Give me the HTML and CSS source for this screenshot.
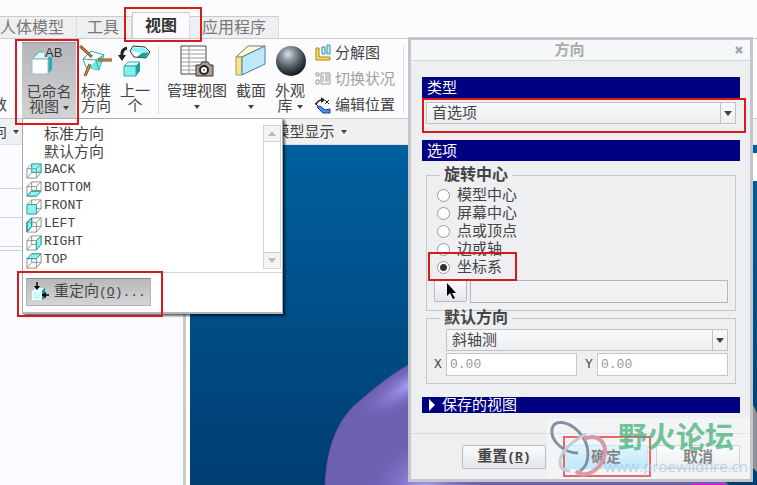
FILE: index.html
```html
<!DOCTYPE html>
<html lang="zh-CN">
<head>
    <meta charset="UTF-8">
    <meta name="viewport" content="width=device-width, initial-scale=1.0">
    <title>视图 - 重定向</title>
    <link rel="stylesheet" href="styles.css">
</head>
<body>
    <div class="app">
        <nav class="tabs">
            <button class="tab first">人体模型</button>
            <button class="tab">工具</button>
            <button class="tab active marked">视图</button>
            <button class="tab last">应用程序</button>
        </nav>

        <div class="ribbon">
            <button class="tool cut"><span class="label">数</span></button>
            <div class="dropdown">
                <button class="tool pressed marked">
                    <svg class="icon" width="40" height="36" viewBox="0 0 40 36">
                        <path d="M3 13l7-7h14l-4 7z" fill="#dffcfc" stroke="#3fb5b5"/>
                        <path d="M18 13l5-6v17l-5 4z" fill="#26b3b0"/>
                        <path d="M3 13h16v15H3z" fill="#fff" stroke="#9bb"/>
                        <path d="M15 0h18v11H15z" fill="#bbbdc0"/>
                        <text x="16" y="11" class="icon-text">AB</text>
                    </svg>
                    <span class="label">已命名<br>视图 <i class="caret"></i></span>
                </button>

                <div class="menu">
                    <div class="menu-body">
                        <ul class="views">
                            <li><button><span class="pad"></span>标准方向</button></li>
                            <li><button><span class="pad"></span>默认方向</button></li>
                            <li><button class="en"><svg class="cube" viewBox="0 0 18 18"><path class="face" d="M6 2h10v9H6z"/><path d="M1 7h10v10H1zM1 7l5-5M11 7l5-5M1 17l5-6M11 17l5-6"/></svg>BACK</button></li>
                            <li><button class="en"><svg class="cube" viewBox="0 0 18 18"><path d="M1 7h10v10H1zM6 2h10v9H6zM1 7l5-5M11 7l5-5M1 17l5-6M11 17l5-6"/><path class="face" d="M1 17l5-5h10l-5 5z"/></svg>BOTTOM</button></li>
                            <li><button class="en"><svg class="cube" viewBox="0 0 18 18"><path d="M6 2h10v9H6zM1 7l5-5M11 7l5-5M1 17l5-6M11 17l5-6"/><path class="face" d="M1 7h10v10H1z"/></svg>FRONT</button></li>
                            <li><button class="en"><svg class="cube" viewBox="0 0 18 18"><path class="face" d="M1 7l5-5v9l-5 6z"/><path d="M1 7h10v10H1zM6 2h10v9H6zM11 7l5-5M11 17l5-6"/><path class="edge" d="M1 7l5-5v9l-5 6z"/></svg>LEFT</button></li>
                            <li><button class="en"><svg class="cube" viewBox="0 0 18 18"><path d="M1 7h10v10H1zM6 2h10v9H6zM1 7l5-5M1 17l5-6"/><path class="face" d="M11 7l5-5v9l-5 6z"/></svg>RIGHT</button></li>
                            <li><button class="en"><svg class="cube" viewBox="0 0 18 18"><path d="M1 7h10v10H1zM6 2h10v9H6zM1 17l5-6M11 17l5-6"/><path class="face" d="M1 7l5-5h10l-5 5z"/></svg>TOP</button></li>
                        </ul>
                        <div class="scrollbar">
                            <button aria-label="向上滚动"><i class="arrow-up"></i></button>
                            <button aria-label="向下滚动"><i class="arrow-down"></i></button>
                        </div>
                    </div>
                    <div class="menu-foot">
                        <button class="reorient marked">
                            <svg width="20" height="20" viewBox="0 0 20 20">
                                <path d="M2 9l4-3h9l-3 3z" fill="#d8ffff"/>
                                <path d="M12 9l3-4v11l-3 2z" fill="#17928f"/>
                                <path d="M2 9h10v9H2z" fill="#fff"/>
                                <path d="M3 10h8v7H3z" fill="#c9fbf8"/>
                                <path d="M7 0v6M12 13h7" stroke="#000" stroke-width="1.4"/>
                                <path d="M4 4h6L7 8zM16 10v6l-4-3z" fill="#000"/>
                            </svg>
                            <span>重定向<span class="en">(<u>O</u>)...</span></span>
                        </button>
                    </div>
                </div>
            </div>
            <button class="tool">
                <svg class="icon" width="34" height="36" viewBox="0 0 34 36">
                    <path d="M4 14l8-8 13 4-5 15-13-3z" fill="#fff" stroke="#2aa5a5"/>
                    <path d="M17 15l8-5-5 15-10-2z" fill="#6fe8e4"/>
                    <path d="M4 14l13 1 8-5M17 15l3 10" fill="none" stroke="#2aa5a5"/>
                    <path d="M1 1l12 11M19 15h14M6 31l5-12" stroke="#7a4a1c" stroke-width="3"/>
                    <path d="M1 1l12 11M19 15h14M6 31l5-12" stroke="#e8a95c"/>
                </svg>
                <span class="label">标准<br>方向</span>
            </button>
            <button class="tool">
                <svg class="icon" width="34" height="36" viewBox="0 0 34 36">
                    <path d="M12 6l3-5 12 1 5 5-4 6-12-1z" fill="#fff" stroke="#333"/>
                    <path d="M24 8l7-1-4 6-8-1z" fill="#1b9d9a"/>
                    <path d="M15 2l11 1 5 4-8 1-10-2z" fill="#8af3ef"/>
                    <path d="M9 3Q3 4 4 12" fill="none" stroke="#222" stroke-width="3"/>
                    <path d="M0 10h8l-4 6z" fill="#222"/>
                    <path d="M6 21l4-4h12l-4 4z" fill="#d9ffff" stroke="#3aa"/>
                    <path d="M18 21l4-4v9l-4 5z" fill="#1b9d9a"/>
                    <path d="M6 21h12v10H6z" fill="#83f0ee" stroke="#3aa"/>
                </svg>
                <span class="label">上一<br>个</span>
            </button>
            <span class="divider"></span>
            <button class="tool">
                <svg class="icon" width="34" height="36" viewBox="0 0 34 36">
                    <path d="M1 1h25v28H1z" fill="#fff" stroke="#444"/>
                    <path d="M1 5h25M1 9h25M1 13h25M1 17h25M1 21h25M1 25h25M9 1v28" stroke="#999"/>
                    <path d="M16 20h4l2-3h6l2 3h3v11H16z" fill="#aaa092" stroke="#333"/>
                    <circle cx="24" cy="25" r="4" fill="#fff" stroke="#222" stroke-width="2"/>
                    <circle cx="24" cy="25" r="1" fill="#555"/>
                </svg>
                <span class="label">管理视图<br><i class="caret"></i></span>
            </button>
            <button class="tool">
                <svg class="icon" width="34" height="36" viewBox="0 0 34 36">
                    <path d="M2 12L14 1h17L8 12z" fill="#fffbd0" stroke="#777"/>
                    <path d="M2 12h6v18H2z" fill="#f7e48c" stroke="#a99a55"/>
                    <path d="M8 12L31 1v18L8 30z" fill="#bfe9fb" stroke="#4b7d99"/>
                </svg>
                <span class="label">截面<br><i class="caret"></i></span>
            </button>
            <button class="tool">
                <svg class="icon" width="34" height="36" viewBox="0 0 34 36">
                    <defs>
                        <radialGradient id="ball" cx="40%" cy="28%" r="72%">
                            <stop offset="0" stop-color="#dde2e8"/>
                            <stop offset=".3" stop-color="#8c949e"/>
                            <stop offset=".7" stop-color="#3f464e"/>
                            <stop offset="1" stop-color="#15181b"/>
                        </radialGradient>
                    </defs>
                    <circle cx="18" cy="16" r="15" fill="url(#ball)"/>
                </svg>
                <span class="label">外观<br>库 <i class="caret"></i></span>
            </button>
            <div class="tool-list">
                <button>
                    <svg width="18" height="18" viewBox="0 0 18 18">
                        <path d="M2 4h3v9h11v3H2z" fill="#f5e04c" stroke="#a5851b"/>
                        <path d="M8 3h3v7H8zM13 1h3v9h-3z" fill="#c4f3fa" stroke="#3c8c9c"/>
                    </svg>
                    分解图
                </button>
                <button disabled>
                    <svg width="18" height="18" viewBox="0 0 18 18" fill="none" stroke="#999">
                        <path d="M2 3h3v3H2zM2 10h3v4H2zM7 3h9v11H7zM9 5v7M11 5h4M11 7h4M11 9h4M11 11h4"/>
                    </svg>
                    切换状况
                </button>
                <button>
                    <svg width="18" height="18" viewBox="0 0 18 18">
                        <path d="M2 9q1-5 7-5" fill="none" stroke="#222" stroke-width="1.5"/>
                        <path d="M7 1l4 3-4 3z" fill="#222"/>
                        <path d="M11 8l4-4M11 4l4 4M1 7l3 3" stroke="#222"/>
                        <path d="M3 11l3-1 5 4 5-1v4H9z" fill="#4e90f0" stroke="#123c9c"/>
                    </svg>
                    编辑位置
                </button>
            </div>
            <span class="divider"></span>
        </div>

        <div class="groups">
            <button class="group group-a"><span>向</span><i class="caret"></i></button>
            <span class="group group-b"></span>
            <button class="group group-c">模型显示 <i class="caret"></i></button>
        </div>

        <div class="work">
            <aside class="tree">
                <div class="tree-row tall"></div>
                <div class="tree-row"></div>
                <div class="tree-row"></div>
                <div class="tree-row thin"></div>
            </aside>
            <svg class="canvas" viewBox="0 0 567 340" preserveAspectRatio="xMinYMin slice">
                <defs>
                    <linearGradient id="sky" x2="0" y2="1">
                        <stop offset="0" stop-color="#00609f"/>
                        <stop offset="1" stop-color="#003d70"/>
                    </linearGradient>
                    <radialGradient id="shine">
                        <stop offset="0" stop-color="#aea3ff"/>
                        <stop offset="1" stop-color="#6f63b5" stop-opacity="0"/>
                    </radialGradient>
                    <clipPath id="shape">
                        <path d="M135 341C137 300 148 278 163 262C180 247 198 231 222 218Q300 180 400 200L540 341z"/>
                    </clipPath>
                </defs>
                <rect width="567" height="341" fill="url(#sky)"/>
                <g clip-path="url(#shape)">
                    <rect x="130" y="180" width="420" height="161" fill="#6c60b0"/>
                    <ellipse cx="222" cy="238" rx="70" ry="20" fill="url(#shine)" transform="rotate(-32 222 238)"/>
                    <ellipse cx="235" cy="345" rx="60" ry="55" fill="url(#shine)"/>
                </g>
                <path d="M135 341C137 300 148 278 163 262C180 247 198 231 222 218" fill="none" stroke="#6b55a0"/>
                <path d="M563 8h4v28h-4z" fill="#fff"/>
                <path d="M563 260l4 8v59l-4-4z" fill="#8b9099"/>
                <path d="M502 339h32v2h-32z" fill="#f0f"/>
            </svg>
        </div>

        <form class="dialog">
            <header class="titlebar">
                <h1>方向</h1>
                <button type="button" class="close" aria-label="关闭">
                    <svg width="10" height="10" viewBox="0 0 10 10"><path d="M2 2l6 6M8 2l-6 6" stroke="#aaa" stroke-width="2.5"/></svg>
                </button>
            </header>

            <div class="content">
                <h2><label for="type">类型</label></h2>
                <div class="select type marked">
                    <select id="type"><option>首选项</option></select>
                </div>

                <h2>选项</h2>
                <fieldset class="center">
                    <legend>旋转中心</legend>
                    <label class="radio"><input type="radio" name="center">模型中心</label>
                    <label class="radio"><input type="radio" name="center">屏幕中心</label>
                    <label class="radio"><input type="radio" name="center">点或顶点</label>
                    <label class="radio"><input type="radio" name="center">边或轴</label>
                    <label class="radio marked"><input type="radio" name="center" checked>坐标系</label>
                    <div class="pick">
                        <button type="button" aria-label="选择参考">
                            <svg width="12" height="18" viewBox="0 0 12 18"><path d="M2 1v13l3-3 3 6 2-1-3-5h4z" fill="#000"/></svg>
                        </button>
                        <input type="text" class="ref" aria-label="参考" readonly>
                    </div>
                </fieldset>

                <fieldset class="default">
                    <legend>默认方向</legend>
                    <div class="select">
                        <select aria-label="默认方向"><option>斜轴测</option></select>
                    </div>
                    <div class="coords">
                        <label for="x">X</label>
                        <input type="text" id="x" value="0.00" disabled>
                        <label for="y" class="y">Y</label>
                        <input type="text" id="y" value="0.00" disabled>
                    </div>
                </fieldset>

                <h2 class="saved"><button type="button"><i class="arrow-right"></i>保存的视图</button></h2>
            </div>

            <footer class="actions">
                <button type="button" class="reset">重置<span class="en">(<u>R</u>)</span></button>
                <button type="button" class="ok marked">确定</button>
                <button type="button">取消</button>
            </footer>

            <div class="watermark">
                <svg width="64" height="60" viewBox="0 0 64 60" fill="none">
                    <path d="M30 34C16 34 2 22 4 10C6 0 20 2 30 12C44 26 42 46 32 52" stroke="#8190a4" stroke-width="3"/>
                    <path d="M38 15Q14 28 12 42Q12 52 22 52" stroke="#c3cdd8" stroke-width="3"/>
                    <path d="M36 20C50 14 60 24 56 38C52 52 36 60 28 52" stroke="#d99aa5" stroke-width="4"/>
                </svg>
                <div class="mark-text">
                    <strong>野火论坛</strong>
                    <span>www.proewildfire.cn</span>
                </div>
            </div>
        </form>
    </div>
</body>
</html>
```

FILE: styles.css
```css
* {
    box-sizing: border-box;
}

body {
    margin: 0;
    font-family: "Liberation Sans", "Noto Sans CJK SC", sans-serif;
    font-size: 15px;
    line-height: 18px;
    color: #444;
}

button,
input,
select {
    font: inherit;
    color: inherit;
    margin: 0;
}

button {
    padding: 0;
    border: none;
    background: none;
    white-space: nowrap;
}

.en {
    font-family: "Liberation Mono", monospace;
    font-size: 13px;
}

.app {
    position: relative;
    display: flex;
    flex-direction: column;
    min-height: 100vh;
    overflow: hidden;
    background: #fcfcfe;
}

/* red frames round the steps to click */
.marked {
    position: relative;
}

.marked::after {
    content: "";
    position: absolute;
    inset: -4px;
    border: 2px solid #d81a1a;
    z-index: 3;
    pointer-events: none;
}

/* tabs */
.tabs {
    display: flex;
    align-items: flex-end;
    padding-top: 12px;
    border-bottom: 1px solid #c9cbce;
}

.tab {
    height: 22px;
    padding: 0 12px 0 10px;
    font-size: 16px;
    color: #777;
    background: #edeff1;
    border-top: 1px solid #c9cbce;
    border-right: 1px solid #d9dbde;
}

.tab.first {
    padding-left: 0;
}

.tab.last {
    padding: 0 12px;
}

.tab.active {
    height: 26px;
    padding: 0 12px;
    font-weight: bold;
    color: #333;
    background: #fcfcfe;
    border-left: 1px solid #c9cbce;
}

.tab.active::after {
    inset: -6px -13px -4px -9px;
}

/* ribbon */
.ribbon {
    display: flex;
    gap: 1px;
    padding-top: 3px;
    border-bottom: 1px solid #c9cbce;
}

.tool {
    display: flex;
    flex-direction: column;
    align-items: center;
    gap: 2px;
    min-height: 76px;
    padding: 3px 4px 4px;
    line-height: 15px;
}

.tool.cut {
    width: 21px;
    padding: 0 14px 6px 0;
    align-items: flex-end;
    justify-content: flex-end;
}

.icon {
    flex: none;
    margin: 0 -2px;
}

.icon-text {
    font-family: "Liberation Sans", sans-serif;
    font-size: 13px;
    fill: #333;
}

.pressed {
    width: 54px;
    background: linear-gradient(#b4b6b9, #d2d3d5);
    border-top: 1px solid #999;
}

.pressed::after {
    inset: -4px -3px -7px -7px;
}

.caret {
    display: inline-block;
    vertical-align: middle;
    border: 3px solid transparent;
    border-top: 4px solid #444;
    border-bottom: 0;
}

.divider {
    width: 1px;
    margin: 4px 3px;
    background: #dcdee1;
}

.tool-list {
    display: flex;
    flex-direction: column;
    justify-content: space-between;
    padding: 2px 4px 4px;
}

.tool-list button {
    display: flex;
    align-items: center;
    gap: 3px;
}

.tool-list button:disabled {
    color: #a0a0a0;
}

.groups {
    display: flex;
    height: 26px;
    background: #eef0f2;
    border-bottom: 1px solid #dfe1e4;
}

.group {
    display: flex;
    align-items: center;
    justify-content: center;
    gap: 6px;
}

.group-a {
    width: 24px;
    justify-content: flex-end;
    padding-right: 5px;
}

.group-b {
    width: 135px;
}

.group-c {
    width: 303px;
}

/* named views menu */
.dropdown {
    position: relative;
}

.menu {
    position: absolute;
    top: 100%;
    left: 0;
    z-index: 2;
    width: 261px;
    background: #fff;
    border: 1px solid #a9abae;
    border-bottom: 2px solid #b4b7ba;
    box-shadow: 2px 2px 2px rgba(0, 0, 0, .6);
}

.menu-body {
    display: flex;
    justify-content: space-between;
    padding-top: 6px;
    padding-bottom: 3px;
    border-bottom: 1px solid #d4d4d4;
}

.views {
    list-style: none;
    margin: 0;
    padding: 0 0 0 3px;
}

.views button {
    display: flex;
    align-items: center;
    gap: 1px;
    height: 18px;
}

.pad,
.cube {
    width: 17px;
    height: 17px;
}

.cube path {
    fill: none;
    stroke: #8d8d8d;
}

.cube .face {
    fill: #8ff5f2;
    stroke: #159c92;
}

.cube .edge {
    stroke: #159c92;
}

.scrollbar {
    display: flex;
    flex-direction: column;
    justify-content: space-between;
    width: 18px;
    margin-right: 1px;
    border: 1px solid #d4d4d4;
}

.scrollbar button {
    display: flex;
    align-items: center;
    justify-content: center;
    height: 16px;
    background: #f4f4f4;
    border-bottom: 1px solid #d4d4d4;
}

.scrollbar button:last-child {
    border-top: 1px solid #d4d4d4;
    border-bottom: none;
}

.arrow-up,
.arrow-down {
    border: 4px solid transparent;
}

.arrow-up {
    border-top: 0;
    border-bottom: 5px solid #bbb;
}

.arrow-down {
    border-bottom: 0;
    border-top: 5px solid #bbb;
}

.menu-foot {
    padding: 5px 3px 6px;
}

.reorient {
    display: flex;
    align-items: center;
    gap: 4px;
    height: 28px;
    padding: 0 4px 0 3px;
    background: linear-gradient(#b7b9bb, #d4d5d7);
    border: 1px solid #b0b2b4;
    border-top: 1px solid #888;
}

.reorient::after {
    inset: -8px -13px -12px -10px;
}

/* work area */
.work {
    display: flex;
    flex: 1;
}

.tree {
    width: 190px;
    border-right: 4px solid #fff;
    background: #fafbfe;
    box-shadow: inset -3px 0 #c8c9cb;
}

.tree-row {
    height: 29px;
    border-bottom: 1px solid #cfd1d4;
}

.tree-row.tall {
    height: 44px;
}

.tree-row.thin {
    height: 4px;
}

.canvas {
    flex: 1;
    width: 0;
    min-height: 340px;
    height: 100%;
}

/* orientation dialog */
.dialog {
    position: absolute;
    top: 37px;
    right: 4px;
    z-index: 4;
    width: 345px;
    background: #edeff1;
    border: 3px solid #c4c6c9;
}

.titlebar {
    display: flex;
    align-items: center;
    height: 21px;
    padding-right: 6px;
    background: #f6f7f9;
    border-bottom: 1px solid #d3dadd;
}

h1 {
    flex: 1;
    margin: 0;
    padding-right: 6px;
    font-size: 15px;
    color: #aaa;
    text-align: center;
}

.close {
    display: flex;
}

.content {
    padding: 16px 10px 20px 11px;
}

h2 {
    margin: 0;
    padding: 0 5px;
    font-size: 15px;
    font-weight: normal;
    line-height: 21px;
    color: #fff;
    background: #000080;
}

.select {
    position: relative;
}

.select select {
    display: block;
    width: 100%;
    height: 22px;
    padding: 0 5px;
    appearance: none;
    background: linear-gradient(#bfc1c4, #bfc1c4) right 14px top / 1px 100% no-repeat, linear-gradient(#f8f9fa, #eceef0);
    border: 1px solid #bfc1c4;
    border-radius: 0;
}

.select::before {
    content: "";
    position: absolute;
    top: 9px;
    right: 4px;
    border: 4px solid transparent;
    border-top: 5px solid #444;
    border-bottom: 0;
    pointer-events: none;
}

.type {
    margin: 4px 4px 16px;
}

.type::after {
    inset: -4px -10px -9px -4px;
}

fieldset {
    min-width: 0;
    margin: 0 4px;
    padding: 4px 7px 7px;
    border: 1px solid #c4c6c9;
}

legend {
    margin-left: 6px;
    padding: 0 4px;
    font-size: 16px;
    font-weight: bold;
    line-height: 14px;
}

.center {
    margin-top: 7px;
}

.radio {
    display: flex;
    align-items: center;
    gap: 7px;
    width: 80px;
    height: 18px;
    margin-left: 3px;
}

.radio input {
    width: 13px;
    height: 13px;
    appearance: none;
    background: #fff;
    border: 1px solid #999;
    border-radius: 50%;
}

.radio input:checked {
    background: radial-gradient(#333 3px, #fff 4px);
}

.radio.marked::after {
    inset: -6px 0 -5px -9px;
}

.pick {
    display: flex;
    gap: 3px;
    margin-top: 4px;
}

.pick button {
    display: flex;
    align-items: center;
    justify-content: center;
    width: 33px;
    height: 22px;
}

.pick button,
.actions button {
    background: linear-gradient(#fafbfc, #e4e6e9);
    border: 1px solid #b9bcc0;
    border-radius: 2px;
}

.ref {
    flex: 1;
    min-width: 0;
    height: 23px;
    background: #f0f1f2;
    border: 1px solid #b4b6b9;
}

.default .select {
    margin-left: 12px;
}

.coords {
    display: flex;
    align-items: center;
    gap: 4px;
    margin-top: 2px;
    font-family: "Liberation Mono", monospace;
    font-size: 13px;
}

.coords label {
    width: 8px;
}

.coords .y {
    margin-left: 4px;
}

.coords input {
    flex: 1;
    min-width: 0;
    height: 23px;
    padding: 0 3px;
    color: #999;
    background: #fff;
    border: 1px solid #c4c6c9;
}

.saved {
    margin-top: 13px;
    line-height: 16px;
}

.saved button {
    display: flex;
    align-items: center;
    gap: 7px;
    height: 16px;
    padding-left: 2px;
}

.arrow-right {
    border: 6px solid transparent;
    border-left: 6px solid #fff;
    border-right: 0;
}

.actions {
    display: flex;
    justify-content: flex-end;
    gap: 8px;
    padding: 11px 10px 10px;
    border-top: 1px solid #d5d7da;
}

.actions button {
    width: 84px;
    height: 24px;
    font-weight: bold;
}

.actions .reset {
    margin-right: 10px;
}

.actions .ok {
    background: linear-gradient(#d3eefd, #9fdcf9);
    border-color: #a9d9ef;
}

.actions .ok::after {
    inset: -10px -4px -9px -2px;
}

.watermark {
    position: absolute;
    right: 0;
    bottom: 0;
    z-index: 5;
    display: flex;
    padding: 1px 2px 0 1px;
    background: rgba(255, 255, 255, .35);
    pointer-events: none;
}

.mark-text {
    display: flex;
    flex-direction: column;
    align-items: flex-end;
    margin-left: -8px;
    opacity: .7;
}

.mark-text strong {
    padding-right: 14px;
    font-size: 29px;
    line-height: 38px;
    color: #3cae73;
}

.mark-text span {
    font-family: "Open Sans", sans-serif;
    font-size: 15px;
    color: #a3c8e4;
}
```
